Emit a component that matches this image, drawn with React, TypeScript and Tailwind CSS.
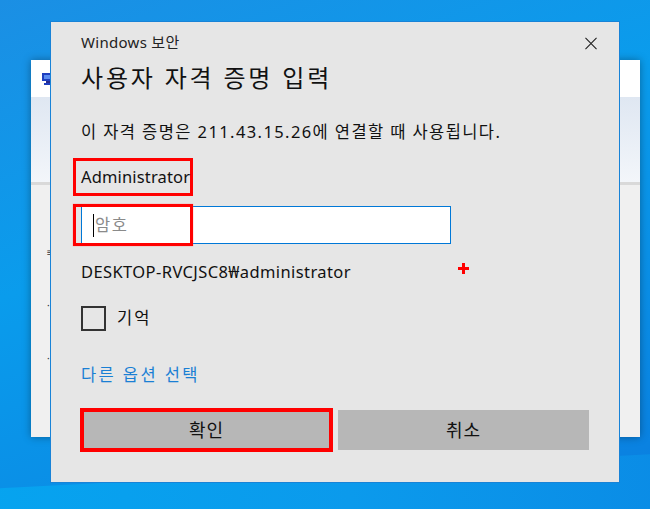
const uiFont = {
  fontFamily: '"Noto Sans", "Noto Sans CJK KR", sans-serif',
};

function BackWindow() {
  return (
    <div className="absolute left-[31px] top-[60px] w-[609px] h-[377px] bg-[#f0f0f0] shadow-[0_0_8px_rgba(0,0,0,0.35)] flex flex-col">
      <div className="h-[37px] bg-white flex items-center pl-[10px]">
        <svg width="14" height="12" viewBox="0 0 14 12">
          <rect x="1" y="0" width="11" height="8" fill="#1f3fbf" />
          <rect x="3" y="2" width="7" height="4" fill="#5c8cf0" />
          <rect x="5" y="8" width="4" height="2" fill="#2a2a8a" />
          <rect x="3" y="10" width="8" height="2" fill="#1f3fbf" />
        </svg>
      </div>
      <div className="h-[85px] bg-[linear-gradient(to_bottom,#dfe7f2,#f3f6fa)]" />
      <div className="h-[3px] bg-[#d9d9d9]" />
      <div className="flex-1 pl-[16px] pt-[60px] flex flex-col gap-[38px] text-[#333] text-[10px]">
        <span>≡</span>
        <span>·</span>
        <span>·</span>
      </div>
    </div>
  );
}

function RedBox({ className }: { className: string }) {
  return (
    <div
      className={`absolute border-[3px] border-[#ff0000] shadow-[0_0_1px_#ff7070] pointer-events-none ${className}`}
    />
  );
}

function Dialog() {
  return (
    <div
      className="absolute left-[50px] top-[21px] w-[570px] h-[462px] bg-[#e6e6e6] border border-[#1883d7] pl-[30px] pr-[30px] pt-[9px] text-[#1a1a1a]"
      style={uiFont}
    >
      <button className="absolute left-[534px] top-[15px] w-[12px] h-[12px] flex items-center justify-center text-[#1a1a1a]">
        <svg width="13" height="13" viewBox="0 0 13 13" fill="none" stroke="currentColor" strokeWidth="1.1">
          <path d="M0.5 0.5 L12.5 12.5 M12.5 0.5 L0.5 12.5" />
        </svg>
      </button>

      <div className="h-[22px] leading-[22px] text-[15px] tracking-[0.3px] text-[#222]">Windows 보안</div>

      <div className="mt-[9px] h-[32px] leading-[32px] text-[24px] tracking-[2.8px] text-[#111]">
        사용자 자격 증명 입력
      </div>

      <div className="mt-[26px] h-[24px] leading-[24px] text-[16.5px] tracking-[1.4px] text-[#111]">
        이 자격 증명은 211.43.15.26에 연결할 때 사용됩니다.
      </div>

      <div className="mt-[14px] ml-[-8px] w-[120px] h-[38px] border-[3px] border-[#ff0000] pl-[5px] flex items-center text-[16.5px] tracking-[0.15px] text-[#111]">
        Administrator
      </div>

      <div className="relative mt-[10px] w-[370px] h-[38px] bg-white border border-[#0078d7] flex items-center pl-[11px]">
        <span className="w-px h-[23px] bg-black" />
        <span className="ml-[1px] text-[16.5px] tracking-[1.5px] text-[#8a8a8a]">암호</span>
        <RedBox className="-left-[9px] -top-[3px] w-[120px] h-[42px]" />
      </div>

      <div className="mt-[16px] h-[24px] leading-[24px] text-[16.5px] tracking-[0.4px] text-[#111]">
        DESKTOP-RVCJSC8₩administrator
      </div>

      <div className="mt-[22px] flex items-center h-[25px]">
        <span className="w-[25px] h-[25px] border-2 border-[#333]" />
        <span className="ml-[11px] text-[16.5px] tracking-[2px] text-[#111]">기억</span>
      </div>

      <div className="mt-[32px] h-[24px] leading-[24px] text-[16.5px] tracking-[2.4px] text-[#1a7fd4]">
        다른 옵션 선택
      </div>

      <div className="mt-[21px] ml-[-1px] flex items-center gap-[5px]">
        <div className="w-[253px] h-[44px] border-[4px] border-[#ff0000] bg-[#b7b7b7] flex items-center justify-center text-[18px] tracking-[1px] text-[#111]">
          확인
        </div>
        <div className="w-[251px] h-[40px] bg-[#b7b7b7] flex items-center justify-center text-[18px] tracking-[1px] text-[#111]">
          취소
        </div>
      </div>

      <svg className="absolute left-[407px] top-[241px]" width="11" height="11" viewBox="0 0 11 11">
        <rect x="0" y="4" width="11" height="3" fill="#ff0000" />
        <rect x="4" y="0" width="3" height="11" fill="#ff0000" />
      </svg>
    </div>
  );
}

export default function App() {
  return (
    <div className="relative w-[650px] h-[509px] overflow-hidden bg-[linear-gradient(160deg,#1b8fe4_0%,#0a9cec_40%,#0a8ee6_70%,#0a7ddf_100%)]">
      <div className="absolute left-[-100px] top-[470px] w-[900px] h-[60px] bg-[linear-gradient(to_right,#05a6f0,#0b9aec,#0a86e3)] rotate-[-3deg]" />
      <BackWindow />
      <Dialog />
    </div>
  );
}
